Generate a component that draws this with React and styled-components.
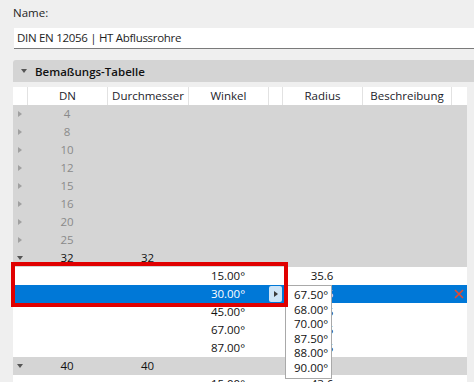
import React from 'react'
import styled, { createGlobalStyle } from 'styled-components'

const GlobalStyle = createGlobalStyle`
  html, body {
    margin: 0;
    padding: 0;
    background: #efefef;
    font-family: "Open Sans", "Noto Sans", sans-serif;
    font-size: 11.5px;
    color: #1e1e1e;
    overflow: hidden;
  }
`

const COLS = '14px 80px 81px 80px 14px 80px 89px 16px'

const Page = styled.div`
  padding: 4px 0 0 13px;
  height: 378px;
  overflow: hidden;
`

const Label = styled.div`
  height: 18px;
  line-height: 18px;
`

const Field = styled.div`
  margin: 6px 0 0 1px;
  height: 20px;
  line-height: 20px;
  padding-left: 3px;
  background: #fff;
  border-bottom: 1px solid #7a7a7a;
  letter-spacing: -0.3px;
`

const SectionBar = styled.div`
  margin-top: 11px;
  height: 22px;
  display: flex;
  align-items: center;
  gap: 8px;
  padding-left: 8px;
  background: #d4d4d4;
  border-radius: 3px 0 0 0;
  font-weight: 600;
  color: #111;
`

const Table = styled.div`
  position: relative;
  margin: 5px 7px 0 0;
`

const HeaderRow = styled.div`
  display: grid;
  grid-template-columns: ${COLS};
  height: 18px;
  background: #fff;
`

const HeadCell = styled.div`
  line-height: 18px;
  text-align: center;
  color: #1c1c2a;
  border-left: ${p => (p.$first ? 'none' : '1px solid #e2e2e2')};
`

const rowBg = { group: '#d5d5d5', child: '#fff', selected: '#0078d7' }

const Row = styled.div`
  display: grid;
  grid-template-columns: ${COLS};
  height: 18px;
  background: ${p => rowBg[p.$kind]};
  color: ${p => (p.$kind === 'selected' ? '#fff' : p.$muted ? '#8a8a8a' : '#111')};
`

const Cell = styled.div`
  line-height: 18px;
  text-align: center;
  white-space: nowrap;
  display: flex;
  align-items: center;
  justify-content: center;
`

const Caret = styled.span`
  width: 0;
  height: 0;
  ${p =>
    p.$open
      ? `border-left: 3.5px solid transparent;
         border-right: 3.5px solid transparent;
         border-top: 4px solid #555;`
      : `border-top: 3.5px solid transparent;
         border-bottom: 3.5px solid transparent;
         border-left: 4px solid #a0a0a0;`}
`

const DropButton = styled.div`
  width: 14px;
  height: 16px;
  margin-left: 1px;
  background: #cde4f7;
  border-radius: 2px;
  display: flex;
  align-items: center;
  justify-content: center;
  & > span {
    border-top: 3.5px solid transparent;
    border-bottom: 3.5px solid transparent;
    border-left: 4px solid #3a3a3a;
    margin-left: 1px;
  }
`

const Popup = styled.div`
  position: absolute;
  left: 272px;
  top: 198px;
  width: 45px;
  padding: 2px 0;
  background: #fff;
  border: 1px solid #a9a9a9;
  z-index: 2;
`

const PopupItem = styled.div`
  height: 14.6px;
  line-height: 14.6px;
  padding-left: 8px;
  color: #111;
`

const Highlight = styled.div`
  position: absolute;
  left: -2px;
  top: 175px;
  width: 269px;
  height: 37px;
  border: 4px solid #e00000;
  z-index: 3;
  pointer-events: none;
`

const collapsed = ['4', '8', '10', '12', '15', '16', '20', '25']
const children = [
  { angle: '15.00°', radius: '35.6' },
  { angle: '30.00°', radius: '39.5', selected: true },
  { angle: '45.00°', radius: '43.5' },
  { angle: '67.00°', radius: '48.5' },
  { angle: '87.00°', radius: '52.5' },
]
const options = ['67.50°', '68.00°', '70.00°', '87.50°', '88.00°', '90.00°']

const DeleteIcon = () => (
  <svg width="10" height="10" viewBox="0 0 10 10">
    <path d="M1 1L9 9M9 1L1 9" stroke="#e8492c" strokeWidth="1.6" fill="none" />
  </svg>
)

const ChildRow = ({ angle, radius, selected }) => (
  <Row $kind={selected ? 'selected' : 'child'}>
    <Cell />
    <Cell />
    <Cell />
    <Cell>{angle}</Cell>
    <Cell>{selected && <DropButton><span /></DropButton>}</Cell>
    <Cell>{radius}</Cell>
    <Cell />
    <Cell>{selected && <DeleteIcon />}</Cell>
  </Row>
)

const App = () => {
  return (
    <Page>
      <GlobalStyle />
      <Label>Name:</Label>
      <Field>DIN EN 12056 | HT Abflussrohre</Field>
      <SectionBar>
        <Caret $open />
        Bemaßungs-Tabelle
      </SectionBar>
      <Table>
        <HeaderRow>
          <HeadCell $first />
          <HeadCell>DN</HeadCell>
          <HeadCell>Durchmesser</HeadCell>
          <HeadCell>Winkel</HeadCell>
          <HeadCell />
          <HeadCell>Radius</HeadCell>
          <HeadCell>Beschreibung</HeadCell>
          <HeadCell />
        </HeaderRow>
        {collapsed.map(dn => (
          <Row key={dn} $kind="group" $muted>
            <Cell><Caret /></Cell>
            <Cell>{dn}</Cell>
            <Cell /><Cell /><Cell /><Cell /><Cell /><Cell />
          </Row>
        ))}
        <Row $kind="group">
          <Cell><Caret $open /></Cell>
          <Cell>32</Cell>
          <Cell>32</Cell>
          <Cell /><Cell /><Cell /><Cell /><Cell />
        </Row>
        {children.map(c => (
          <ChildRow key={c.angle} {...c} />
        ))}
        <Row $kind="group">
          <Cell><Caret $open /></Cell>
          <Cell>40</Cell>
          <Cell>40</Cell>
          <Cell /><Cell /><Cell /><Cell /><Cell />
        </Row>
        <ChildRow angle="15.00°" radius="43.6" />
        <Highlight />
        <Popup>
          {options.map(o => (
            <PopupItem key={o}>{o}</PopupItem>
          ))}
        </Popup>
      </Table>
    </Page>
  )
}

export default App
